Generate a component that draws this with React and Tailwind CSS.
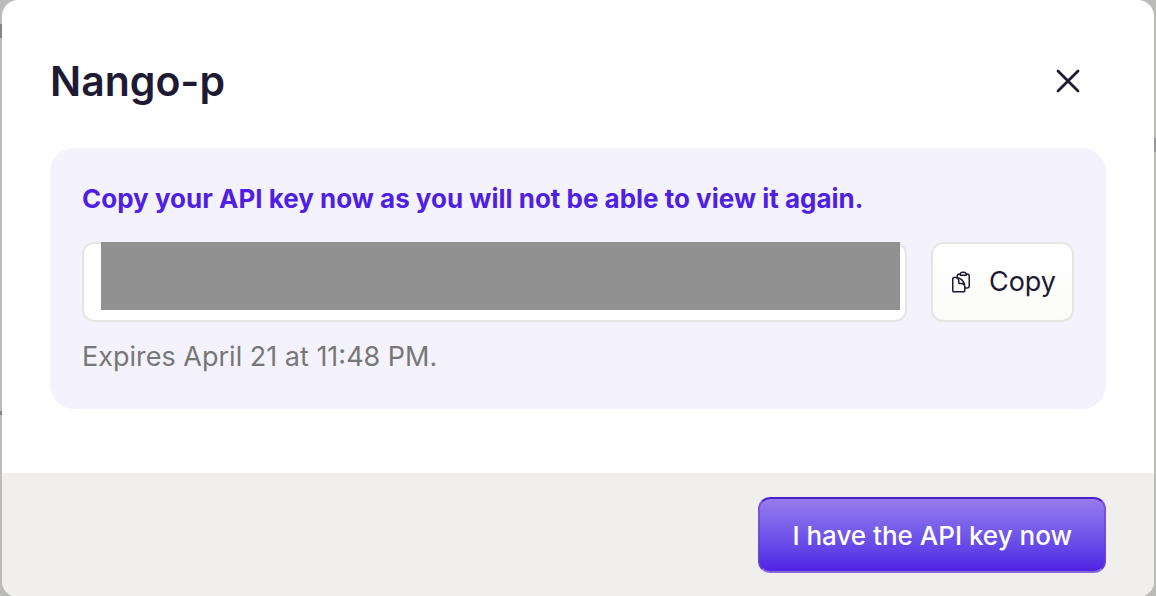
import { HiOutlineClipboardDocument } from "react-icons/hi2";

function CloseButton() {
  return (
    <button type="button" aria-label="Close" className="mr-6 p-0.5 text-[#1e1a33]">
      <svg viewBox="0 0 24 24" className="size-6" fill="none" stroke="currentColor" strokeWidth="2.8" strokeLinecap="round">
        <path d="M2 2 22 22M22 2 2 22" />
      </svg>
    </button>
  );
}

function ApiKeyPanel() {
  return (
    <section className="rounded-3xl bg-[#f4f3fd] px-8 pt-8 pb-[33px]">
      <label htmlFor="api-key" className="block text-[26px] leading-[38px] font-bold text-[#4f1fe4]">
        Copy your API key now as you will not be able to view it again.
      </label>
      <div className="mt-6 flex gap-6">
        <div className="relative flex-1">
          <input
            id="api-key"
            type="text"
            readOnly
            className="h-20 w-full rounded-xl border-2 border-[#e5e5e2] bg-white px-4 text-[27px]"
          />
          <div className="absolute top-0 right-[7px] left-[19px] h-[68px] bg-[#919191]" />
        </div>
        <button
          type="button"
          className="flex h-20 items-center gap-4 rounded-xl border-2 border-[#e5e5e2] bg-linear-to-b from-white to-[#fbfbf9] px-4 text-[27px] text-[#1e1a33]"
        >
          <HiOutlineClipboardDocument className="size-6" />
          Copy
        </button>
      </div>
      <p className="mt-4 text-[27px] leading-[38px] text-[#777775]">Expires April 21 at 11:48 PM.</p>
    </section>
  );
}

export default function App() {
  return (
    <div className="relative h-screen overflow-hidden bg-[#bbbbb9] px-0.5 font-['Inter','Liberation_Sans',sans-serif]">
      <span className="absolute top-6 left-0 h-3.5 w-0.5 bg-[#858585]" />
      <span className="absolute top-[411px] left-0 h-1 w-0.5 bg-[#858585]" />
      <span className="absolute top-[138px] right-0 h-3.5 w-0.5 bg-[#969696]" />
      <div role="dialog" aria-labelledby="dialog-title" className="overflow-hidden rounded-2xl bg-white">
        <div className="px-12 pt-14 pb-16">
          <header className="flex h-[50px] items-center justify-between">
            <h1 id="dialog-title" className="text-[41px] leading-[50px] font-semibold text-[#1e1a33]">
              Nango-p
            </h1>
            <CloseButton />
          </header>
          <div className="pt-[42px]">
            <ApiKeyPanel />
          </div>
        </div>
        <footer className="flex justify-end bg-[#f0efed] px-12 py-6">
          <button
            type="button"
            className="h-[76px] rounded-xl border-2 border-x-[#6a45cf]/60 border-t-[#4a20cc] border-b-[#8568dd] bg-linear-to-b from-[#987bee] to-[#4f1fe4] px-8 text-[26px] font-medium text-white"
          >
            I have the API key now
          </button>
        </footer>
      </div>
    </div>
  );
}
